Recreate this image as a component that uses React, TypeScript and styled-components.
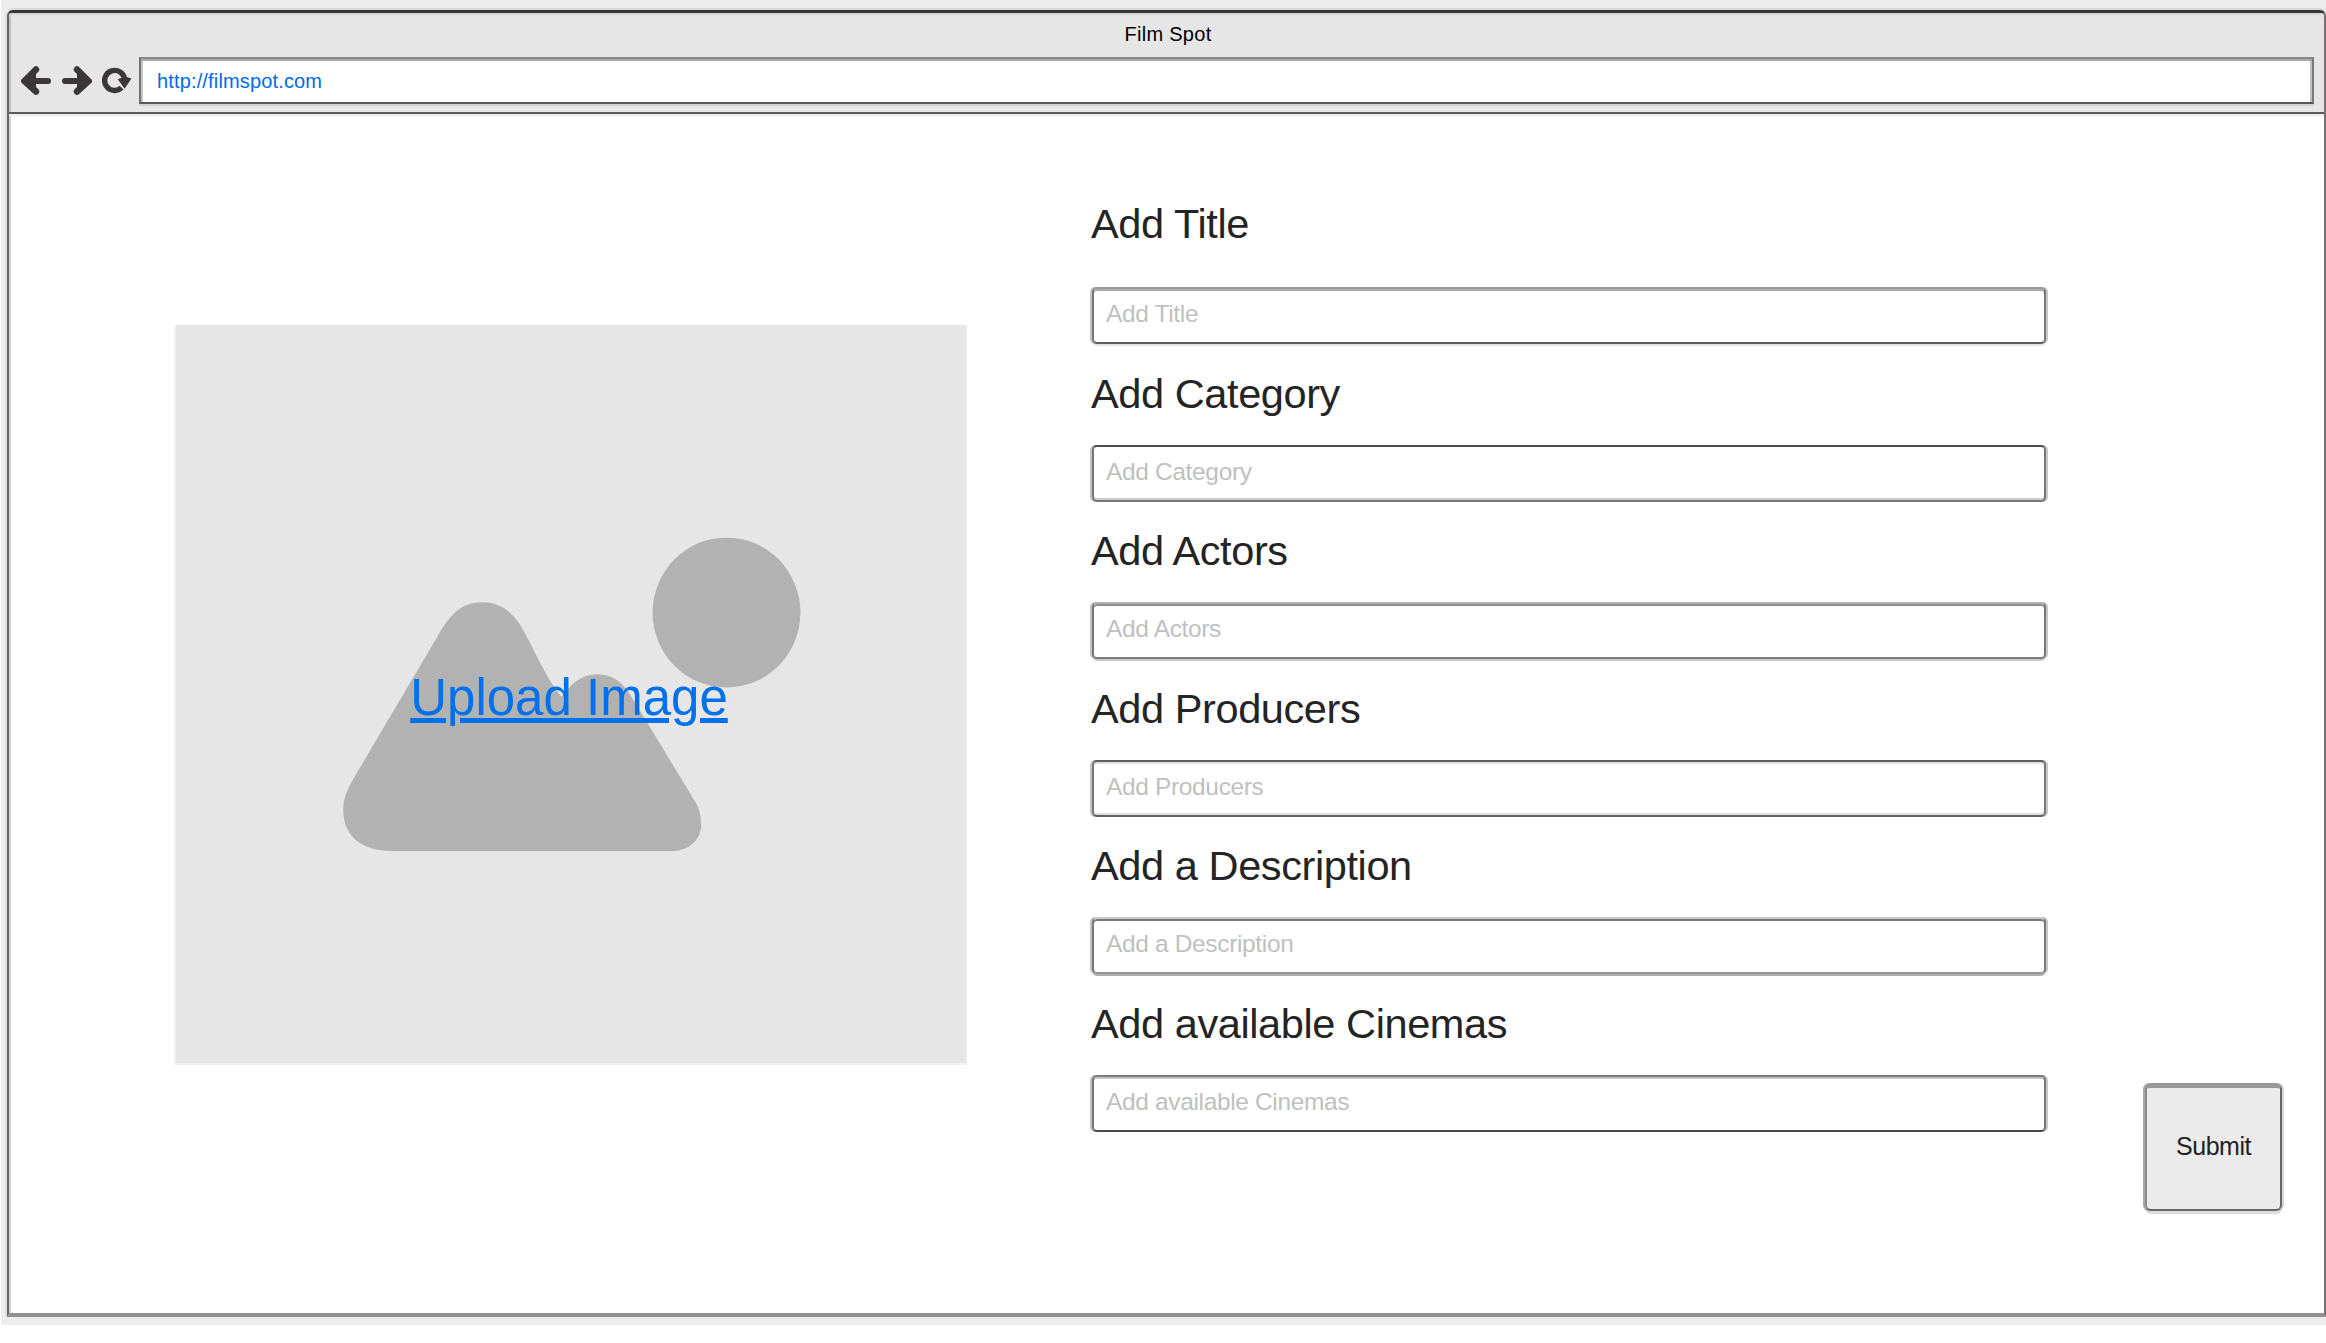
import React from "react";
import styled, { createGlobalStyle } from "styled-components";

const GlobalStyle = createGlobalStyle`
  * { box-sizing: border-box; }
  html, body { margin: 0; padding: 0; background: #fff; }
  body { font-family: "Liberation Sans", Arial, Helvetica, sans-serif; overflow: hidden; }
`;

const Desk = styled.div`
  width: 2325px;
  height: 1325px;
  margin-left: 1px;
  padding: 10px 0 0 6px;
  background: #ededed;
`;

const Window = styled.main`
  display: flex;
  flex-direction: column;
  width: 2319px;
  height: 1307px;
  border-style: solid;
  border-width: 3px 2px 4px 2px;
  border-color: #383536 #737172 #939192 #666465;
  border-radius: 6px 6px 0 0;
  background: #fff;
  box-shadow: -2px 0 0 #dedede, 0 -2px 0 #d9d9d9, inset 2px 0 0 #d0d0d0;
`;

const Header = styled.header`
  display: flex;
  flex-direction: column;
  height: 101px;
  border-bottom: 2px solid #5e5a5b;
  border-radius: 4px 4px 0 0;
  background: #e6e6e6;
  box-shadow: inset 0 2px 0 #d6d6d6, inset 2px 0 0 #c0c0c0, 0 2px 0 #eeeeee;
`;

const WindowTitle = styled.div`
  height: 44px;
  padding: 9px 0 0 3px;
  font-size: 20px;
  line-height: 24px;
  letter-spacing: 0.3px;
  text-align: center;
  color: #000;
`;

const Toolbar = styled.div`
  display: flex;
  align-items: flex-start;
  height: 49px;
  padding: 0 10px 0 12px;
`;

const NavIcon = styled.svg<{ $gap: number }>`
  flex: none;
  width: 30px;
  height: 30px;
  margin: 8px ${(p) => p.$gap}px 0 0;
  fill: none;
  stroke: #3b3738;
`;

const AddressBar = styled.div`
  flex: 1;
  height: 47px;
  padding: 10px 0 0 16px;
  border: 2px solid;
  border-color: #888 #7b797a #5c5758 #737172;
  background: #fff;
  box-shadow: inset 0 2px 0 #a9a9a9, inset 2px 0 0 #c6c6c6, inset -2px 0 0 #c0c0c0,
    0 2px 0 #d2d0d1;
  font-size: 20px;
  line-height: 24px;
  letter-spacing: 0.15px;
  color: #006be8;
`;

const Body = styled.div`
  display: flex;
  flex: 1;
  align-items: flex-start;
  padding: 85px 0 0 165px;
`;

const ImagePanel = styled.section`
  display: grid;
  flex: none;
  width: 793px;
  height: 740px;
  margin-top: 126px;
  place-items: center;
  background: #e6e6e6;
  box-shadow: inset 2px 0 0 #f1f1f1, inset 0 -2px 0 #f1f1f1, inset -2px 0 0 #e9e9e9;
`;

const Landscape = styled.svg`
  grid-area: 1 / 1;
  width: 458px;
  height: 315px;
  margin: 0 0 2px 2px;
  fill: #b2b2b2;
`;

const UploadLink = styled.a`
  grid-area: 1 / 1;
  margin: 6px 3px 0 0;
  font-size: 51px;
  line-height: 58px;
  white-space: nowrap;
  color: #0070ec;
  text-decoration: underline;
  text-decoration-thickness: 5px;
  text-underline-offset: 3px;
`;

const Form = styled.section`
  display: flex;
  flex: none;
  flex-direction: column;
  gap: 25.6px;
  width: 954px;
  margin-left: 125px;
`;

const Field = styled.div<{ $space: number }>`
  display: flex;
  flex-direction: column;
  gap: ${(p) => p.$space}px;
`;

const Label = styled.div`
  margin-left: -1px;
  font-size: 41.5px;
  line-height: 48px;
  letter-spacing: -0.4px;
  white-space: nowrap;
  color: #242424;
`;

interface Edges {
  top: string;
  topInner: string;
  bottomInner: string;
  bottom: string;
  bottomOuter: string;
}

const TextBox = styled.div<{ $e: Edges }>`
  height: 57px;
  padding: 11px 0 0 12px;
  border: 2px solid;
  border-color: ${(p) => p.$e.top} #777 ${(p) => p.$e.bottom} #777;
  border-radius: 5px;
  background: #fff;
  box-shadow: inset 0 2px 0 ${(p) => p.$e.topInner}, inset 0 -2px 0 ${(p) => p.$e.bottomInner},
    -2px 0 0 #c4c4c4, 2px 0 0 #c8c8c8, 0 2px 0 ${(p) => p.$e.bottomOuter};
  font-size: 24.5px;
  line-height: 28px;
  letter-spacing: -0.35px;
  white-space: nowrap;
  color: #c0c0c0;
`;

const SubmitButton = styled.button`
  display: flex;
  flex: none;
  align-items: center;
  justify-content: center;
  width: 137px;
  height: 128px;
  margin: 884px 0 0 99px;
  padding: 0 0 5px 0;
  border-style: solid;
  border-width: 5px 2px 2px 2px;
  border-color: #999 #696969 #666 #8c8c8c;
  border-radius: 6px;
  background: #ebebeb;
  box-shadow: -2px 0 0 #a8a8a8, 2px 0 0 #d6d6d6, 0 3px 0 #dddddd;
  font-family: inherit;
  font-size: 25px;
  letter-spacing: -0.5px;
  color: #222;
`;

const W = "#ffffff";
const fields: { label: string; space: number; edges: Edges }[] = [
  { label: "Add Title", space: 39, edges: { top: "#999", topInner: "#aaa", bottomInner: W, bottom: "#5e5e5e", bottomOuter: "#e4e4e4" } },
  { label: "Add Category", space: 27, edges: { top: "#4d4d4d", topInner: W, bottomInner: "#ccc", bottom: "#777", bottomOuter: W } },
  { label: "Add Actors", space: 27, edges: { top: "#b2b2b2", topInner: "#8e8e8e", bottomInner: W, bottom: "#7b7b7b", bottomOuter: "#c8c8c8" } },
  { label: "Add Producers", space: 27, edges: { top: "#5f5f5f", topInner: "#e0e0e0", bottomInner: "#e0e0e0", bottom: "#606060", bottomOuter: W } },
  { label: "Add a Description", space: 27, edges: { top: "#cacaca", topInner: "#777", bottomInner: W, bottom: "#949494", bottomOuter: "#b0b0b0" } },
  { label: "Add available Cinemas", space: 27, edges: { top: "#7b7b7b", topInner: "#c4c4c4", bottomInner: W, bottom: "#4a4a4a", bottomOuter: W } },
];

const FormOffset = styled(Form)`
  margin-top: 1px;
`;

export default function App() {
  return (
    <>
      <GlobalStyle />
      <Desk>
        <Window>
          <Header>
            <WindowTitle>Film Spot</WindowTitle>
            <Toolbar>
              <NavIcon $gap={11} viewBox="0 0 30 30">
                <path d="M5 16H27" strokeWidth="6" strokeLinecap="round" />
                <path d="M15 4.5L3.5 16L15 26.5" strokeWidth="6.5" strokeLinecap="round" />
                <path d="M4 16L15 7V25Z" fill="#3b3738" stroke="none" />
              </NavIcon>
              <NavIcon $gap={10} viewBox="0 0 30 30">
                <path d="M25 16H3" strokeWidth="6" strokeLinecap="round" />
                <path d="M15 4.5L26.5 16L15 26.5" strokeWidth="6.5" strokeLinecap="round" />
                <path d="M26 16L15 7V25Z" fill="#3b3738" stroke="none" />
              </NavIcon>
              <NavIcon $gap={7} viewBox="0 0 30 30">
                <path d="M19.6 22.6A10 10 0 1 1 22.6 14.5" strokeWidth="5.4" />
                <path d="M15.8 14.2L23 11.5L29.5 13.5L22.6 23.8Z" fill="#3b3738" stroke="none" />
              </NavIcon>
              <AddressBar>http://filmspot.com</AddressBar>
            </Toolbar>
          </Header>
          <Body>
            <ImagePanel>
              <Landscape viewBox="68 50 1374 946">
                <ellipse cx="1219" cy="277" rx="222" ry="225" />
                <path d="M350 350C390 280 425 246 485 246C555 246 590 290 625 360C665 440 690 490 724 530C755 487 785 462 830 462C885 462 915 495 940 540L1125 845C1137 865 1143 885 1143 915C1143 960 1105 994 1050 994H220C125 994 68 950 68 870C68 840 78 812 95 782Z" />
              </Landscape>
              <UploadLink>Upload Image</UploadLink>
            </ImagePanel>
            <FormOffset>
              {fields.map((f) => (
                <Field key={f.label} $space={f.space}>
                  <Label>{f.label}</Label>
                  <TextBox $e={f.edges}>{f.label}</TextBox>
                </Field>
              ))}
            </FormOffset>
            <SubmitButton>Submit</SubmitButton>
          </Body>
        </Window>
      </Desk>
    </>
  );
}
